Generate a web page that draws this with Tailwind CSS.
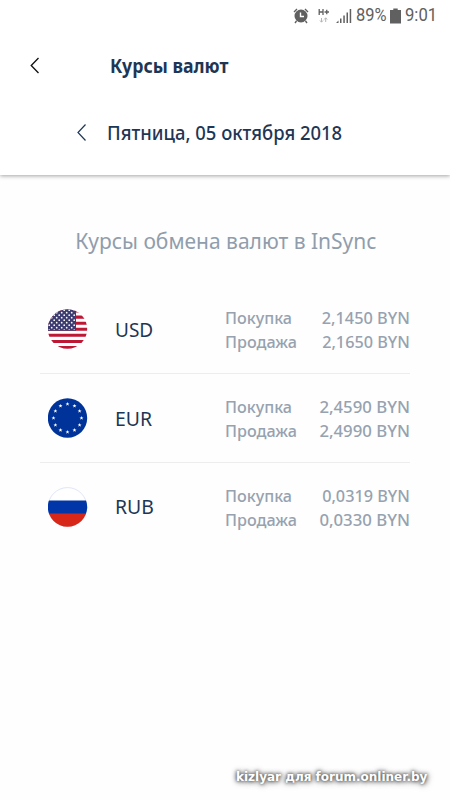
<!DOCTYPE html>
<html lang="ru">
<head>
<meta charset="utf-8">
<title>Курсы валют</title>
<script src="https://cdn.jsdelivr.net/npm/@tailwindcss/browser@4"></script>
</head>
<body class="bg-white">
<div class="relative flex h-[800px] w-[450px] flex-col overflow-hidden bg-[#fefefe] font-['Noto_Sans',sans-serif] text-[#1e3655]">
  <header class="flex h-[175px] shrink-0 flex-col bg-white shadow-[0_1px_4px_rgba(0,0,0,0.36)]">
    <div class="flex h-[31px] items-center pl-[293px] font-[Roboto,sans-serif] text-[18.5px] leading-[31px] text-[#606060]">
      <svg class="h-[16px] w-[16px] shrink-0" viewBox="0 0 16 16" fill="none">
        <path d="M1 4 4 1M12 1l3 3M3.5 13 2 15M12.500 13 14 15" stroke="#606060" stroke-width="1.4"/>
        <circle cx="8" cy="8" r="6.5" fill="#606060"/>
        <path d="M7.500 4.500v4h3.500" stroke="#fff" stroke-width="1.4"/>
      </svg>
      <svg class="ml-[9px] h-[16px] w-[12px] shrink-0" viewBox="0 0 12 16" fill="none">
        <path d="M1.200 1v6M5 1v6M1.200 4H5M6.500 4h4.500M8.750 1.800v4.400" stroke="#606060" stroke-width="1.300"/>
        <path d="M3.500 10v4M2 12.500l1.500 1.700 1.500-1.700M7.700 14v-4M6.200 11.500l1.500-1.700 1.500 1.700" stroke="#b5b5b5" stroke-width="1"/>
      </svg>
      <svg class="ml-[6px] h-[16px] w-[16px] shrink-0" viewBox="0 0 16 16" fill="#606060">
        <path d="M0 15l2.500-2.500V15zM4 10.500h1.500V15H4zM7.300 7.500h1.500V15H7.300zM10.500 4.500H12V15h-1.500zM13.700 1h1.500v14h-1.500z"/>
      </svg>
      <span class="ml-[4px] w-[30px] origin-left scale-x-[0.89]">89%</span>
      <svg class="ml-[4px] h-[16px] w-[11px] shrink-0" viewBox="0 0 10 16" preserveAspectRatio="none" fill="#606060"><path d="M3 .5h4v1.500h3V15.500H0V2h3z"/></svg>
      <span class="ml-[4px] w-[32px] origin-left scale-x-[0.9]">9:01</span>
    </div>
    <div class="flex h-[68px] items-center pl-[30px]">
      <svg class="h-[17px] w-[10px]" viewBox="0 0 10 18" fill="none" stroke="#111" stroke-width="1.400"><path d="M8.700 1 1 9l7.700 8"/></svg>
      <h1 class="ml-[70px] origin-left whitespace-nowrap pt-px text-[20px] leading-[28px] font-bold scale-x-[0.885]">Курсы валют</h1>
    </div>
    <div class="flex h-[67px] items-center pl-[77px]">
      <svg class="h-[17px] w-[10px]" viewBox="0 0 10 17" fill="none" stroke="#1e3655" stroke-width="1.200"><path d="M8.500.500 1 8.500l7.500 8"/></svg>
      <span class="ml-[20px] origin-left whitespace-nowrap text-[19px] leading-[28px] font-medium scale-x-[0.97]">Пятница, 05 октября 2018</span>
    </div>
  </header>

  <main class="flex flex-col px-[40px] pt-[49px]">
    <h2 class="h-[32px] w-fit origin-left pl-[37px] whitespace-nowrap text-[22px] leading-[32px] text-[#909dac] scale-x-[0.954]">Курсы обмена валют в InSync</h2>

    <section class="mt-[29px] flex h-[89px] items-center border-b border-[#ededed] pl-[8px]">
      <svg class="h-[40px] w-[40px] shrink-0" viewBox="0 0 40 40">
        <defs>
          <clipPath id="disc"><circle cx="19.500" cy="20" r="19.700"/></clipPath>
          <pattern id="stars" width="5" height="5" patternUnits="userSpaceOnUse"><circle cx="1.200" cy="1.200" r=".85" fill="#fff"/><circle cx="3.700" cy="3.700" r=".85" fill="#fff"/></pattern>
        </defs>
        <g clip-path="url(#disc)">
          <path fill="#fff" d="M0 0h40v40H0z"/>
          <path stroke="#bd1735" stroke-width="3.050" d="M0 2h40M0 8.100h40M0 14.200h40M0 20.300h40M0 26.300h40M0 32.400h40M0 38.500h40"/>
          <path fill="#3d3c70" d="M0 0h28v21.800H0z"/>
          <path fill="url(#stars)" d="M0 0h27.500v21H0z"/>
        </g>
      </svg>
      <span class="ml-[27px] w-[110px] pt-[2px] text-[20px] leading-[28px]"><span class="inline-block origin-left scale-x-[0.95]">USD</span></span>
      <div class="grow pt-[2px] text-[17px] leading-[24px] font-medium text-[#96a2b0]">
        <div class="flex justify-between"><span class="origin-left scale-x-[0.95]">Покупка</span><span class="origin-right scale-x-[0.96]">2,1450 BYN</span></div>
        <div class="flex justify-between"><span class="origin-left scale-x-[0.95]">Продажа</span><span class="origin-right scale-x-[0.955]">2,1650 BYN</span></div>
      </div>
    </section>

    <section class="flex h-[89px] items-center border-b border-[#ededed] pl-[8px]">
      <svg class="h-[40px] w-[40px] shrink-0" viewBox="0 0 40 40">
        <defs><path id="s" fill="#fff" d="M0-2 .55-.6 2-.6.85.3 1.250 1.700 0 .85-1.250 1.700-.85.3-2-.6-.55-.6z"/></defs>
        <circle cx="19.500" cy="20" r="19.700" fill="#039"/>
        <use href="#s" x="19.500" y="6"/><use href="#s" x="26.500" y="7.900"/><use href="#s" x="31.600" y="13"/><use href="#s" x="33.500" y="20"/><use href="#s" x="31.600" y="27"/><use href="#s" x="26.500" y="32.100"/><use href="#s" x="19.500" y="34"/><use href="#s" x="12.500" y="32.100"/><use href="#s" x="7.400" y="27"/><use href="#s" x="5.500" y="20"/><use href="#s" x="7.400" y="13"/><use href="#s" x="12.500" y="7.900"/>
      </svg>
      <span class="ml-[27px] w-[110px] pt-[2px] text-[20px] leading-[28px]"><span class="inline-block origin-left scale-x-[0.97]">EUR</span></span>
      <div class="grow pt-[2px] text-[17px] leading-[24px] font-medium text-[#96a2b0]">
        <div class="flex justify-between"><span class="origin-left scale-x-[0.95]">Покупка</span><span class="origin-right scale-x-[0.985]">2,4590 BYN</span></div>
        <div class="flex justify-between"><span class="origin-left scale-x-[0.95]">Продажа</span><span class="origin-right scale-x-[0.985]">2,4990 BYN</span></div>
      </div>
    </section>

    <section class="flex h-[87px] items-center pl-[8px]">
      <svg class="h-[40px] w-[40px] shrink-0" viewBox="0 0 40 40">
        <circle cx="19.500" cy="20" r="19.400" fill="#fff" stroke="#c9d5f2" stroke-width=".6"/>
        <g clip-path="url(#disc)"><path fill="#0036a7" d="M0 13.500h40V27H0z"/><path fill="#d62718" d="M0 26.500h40V40H0z"/></g>
      </svg>
      <span class="ml-[27px] w-[110px] pt-px text-[20px] leading-[28px]"><span class="inline-block origin-left scale-x-[0.97]">RUB</span></span>
      <div class="grow pt-[2px] text-[17px] leading-[24px] font-medium text-[#96a2b0]">
        <div class="flex justify-between"><span class="origin-left scale-x-[0.95]">Покупка</span><span class="origin-right scale-x-[0.955]">0,0319 BYN</span></div>
        <div class="flex justify-between"><span class="origin-left scale-x-[0.95]">Продажа</span><span class="origin-right scale-x-[0.985]">0,0330 BYN</span></div>
      </div>
    </section>
  </main>

  <div class="absolute top-[768px] left-[236px] whitespace-nowrap font-['DejaVu_Sans',sans-serif] text-[12px] leading-[18px] font-bold text-white [text-shadow:0_0_3px_#555,0_0_5px_#666,1px_1px_6px_#777]">kizlyar для forum.onliner.by</div>
</div>
</body>
</html>
